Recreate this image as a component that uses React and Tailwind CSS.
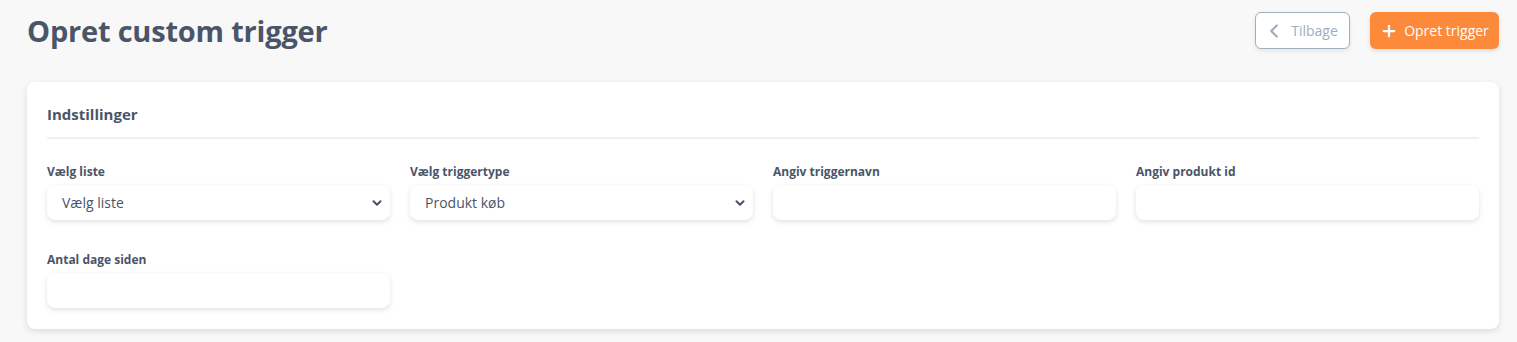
import React from "react";
import { ChevronLeft, Plus, ChevronDown } from "lucide-react";

const Field = ({ label, children }) => (
    <div className="flex flex-col">
        <label className="mb-[5px] text-[12px] font-bold leading-4 text-[#4a5568]">
            {label}
        </label>
        {children}
    </div>
);

const SelectBox = ({ value }) => (
    <div className="flex h-[35px] items-center justify-between rounded-lg bg-white pl-[15px] pr-[6px] text-[14px] text-[#4a5568] shadow-[0_2px_5px_rgba(0,0,0,0.12)]">
        <span>{value}</span>
        <ChevronDown size={14} strokeWidth={3.5} className="text-[#4a5568]" />
    </div>
);

const TextBox = () => (
    <div className="h-[35px] rounded-lg bg-white shadow-[0_2px_5px_rgba(0,0,0,0.12)]" />
);

export default function App() {
    return (
        <div
            className="min-h-[342px] bg-[#f8f8f8] pl-[27px] pr-[18px] pt-3 pb-4"
            style={{ fontFamily: '"Open Sans", "Noto Sans", sans-serif' }}
        >
            <div className="flex h-[37px] items-center justify-between">
                <h1 className="text-[29px] font-bold tracking-[-0.2px] text-[#4a5568]">
                    Opret custom trigger
                </h1>
                <div className="flex items-center gap-5">
                    <button className="flex h-[37px] w-[95px] items-center justify-center gap-[6px] rounded-md border border-[#a0aec0] bg-white text-[14px] text-[#a0aec0] shadow-[0_2px_4px_rgba(0,0,0,0.08)]">
                        <ChevronLeft size={22} strokeWidth={2.5} className="-ml-1" />
                        Tilbage
                    </button>
                    <button className="flex h-[37px] w-[129px] items-center justify-center gap-[6px] rounded-md bg-[#fd8a3a] text-[14px] text-white shadow-[0_2px_4px_rgba(0,0,0,0.12)]">
                        <Plus size={18} strokeWidth={3} />
                        Opret trigger
                    </button>
                </div>
            </div>

            <div className="mt-[33px] rounded-lg bg-white px-5 pt-[22px] pb-[21px] shadow-[0_2px_6px_rgba(0,0,0,0.12)]">
                <h2 className="text-[15px] font-bold leading-5 text-[#4a5568]">
                    Indstillinger
                </h2>
                <div className="mt-[13px] h-[2px] bg-[#f0f0f0]" />
                <div className="mt-[25px] grid grid-cols-4 gap-x-5 gap-y-[32px]">
                    <Field label="Vælg liste">
                        <SelectBox value="Vælg liste" />
                    </Field>
                    <Field label="Vælg triggertype">
                        <SelectBox value="Produkt køb" />
                    </Field>
                    <Field label="Angiv triggernavn">
                        <TextBox />
                    </Field>
                    <Field label="Angiv produkt id">
                        <TextBox />
                    </Field>
                    <Field label="Antal dage siden">
                        <TextBox />
                    </Field>
                </div>
            </div>
        </div>
    );
}
